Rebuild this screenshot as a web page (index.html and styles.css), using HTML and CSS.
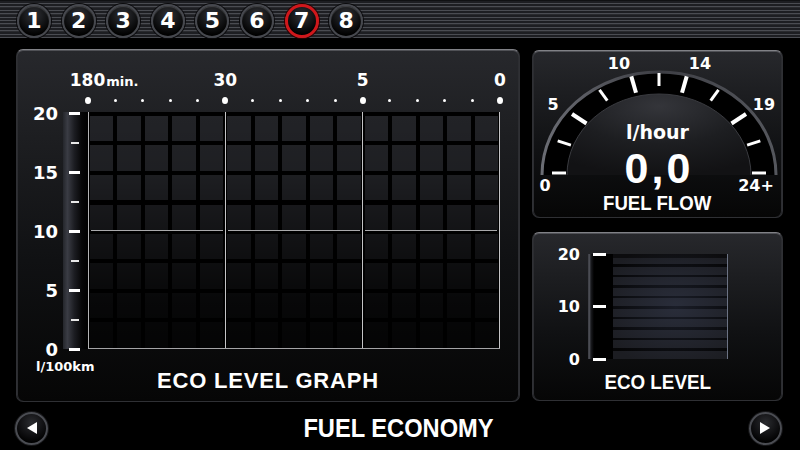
FILE: index.html
```html
<!DOCTYPE html>
<html>
<head>
<meta charset="utf-8">
<title>Fuel Economy</title>
<link rel="stylesheet" href="styles.css">
</head>
<body>
<header class="topbar">
  <nav class="tabs">
    <span class="tab">1</span>
    <span class="tab">2</span>
    <span class="tab">3</span>
    <span class="tab">4</span>
    <span class="tab">5</span>
    <span class="tab">6</span>
    <span class="tab active">7</span>
    <span class="tab">8</span>
  </nav>
</header>

<main class="main">
  <section class="panel graph-panel">
    <div class="xlabels">
      <span class="xl">180<span class="xmin">min.</span></span>
      <span class="xl">30</span>
      <span class="xl">5</span>
      <span class="xl">0</span>
    </div>
    <div class="dots">
      <i class="big"></i><i></i><i></i><i></i><i></i>
      <i class="big"></i><i></i><i></i><i></i><i></i>
      <i class="big"></i><i></i><i></i><i></i><i></i>
      <i class="big"></i>
    </div>
    <div class="chart">
      <div class="ylabels">
        <span>20</span><span>15</span><span>10</span><span>5</span><span>0</span>
      </div>
      <div class="yaxis">
        <i class="major"></i><i></i><i class="major"></i><i></i><i class="major"></i><i></i><i class="major"></i><i></i><i class="major"></i>
      </div>
      <div class="plot">
        <div class="seg"></div>
        <div class="seg"></div>
        <div class="seg"></div>
      </div>
    </div>
    <div class="graph-foot">
      <span class="unit">l/100km</span>
      <span class="graph-title">ECO LEVEL GRAPH</span>
      <span></span>
    </div>
  </section>

  <div class="side">
    <section class="panel flow-panel">
      <svg class="dial" width="251" height="168" viewBox="0 0 251 168">
        <defs>
          <linearGradient id="rim" x1="0" y1="0" x2="1" y2="0">
            <stop offset="0" stop-color="#6b6d74"/>
            <stop offset="0.5" stop-color="#3d3e44"/>
            <stop offset="1" stop-color="#55575d"/>
          </linearGradient>
          <radialGradient id="dome" cx="0.5" cy="0.15" r="0.85">
            <stop offset="0" stop-color="#34353a"/>
            <stop offset="0.55" stop-color="#1d1e21"/>
            <stop offset="1" stop-color="#121214"/>
          </radialGradient>
        </defs>
        <path d="M10 125 A117 103 0 0 1 244 125 Z" fill="#000"/>
        <path d="M10 125 A117 103 0 0 1 244 125" fill="none" stroke="url(#rim)" stroke-width="3"/>
        <path d="M35 125 A92 81 0 0 1 219 125 Z" fill="url(#dome)"/>
        <path d="M35 125 A92 81 0 0 1 219 125" fill="none" stroke="#3a3b40" stroke-width="1"/>
        <g stroke="#fff" stroke-width="3">
          <line x1="20" y1="123" x2="34" y2="123"/>
          <line x1="25.7" y1="90.9" x2="38.9" y2="95.1"/>
          <line x1="40" y1="64" x2="54.5" y2="73.5" stroke-width="4"/>
          <line x1="67.5" y1="39.9" x2="75.3" y2="50.7"/>
          <line x1="99.3" y1="26.4" x2="104" y2="42.8" stroke-width="4"/>
          <line x1="127" y1="23" x2="127" y2="36"/>
          <line x1="154.7" y1="26.4" x2="150" y2="42.8" stroke-width="4"/>
          <line x1="186.5" y1="39.9" x2="178.7" y2="50.7"/>
          <line x1="214" y1="64" x2="199.5" y2="73.5" stroke-width="4"/>
          <line x1="228.3" y1="90.9" x2="215.1" y2="95.1"/>
          <line x1="234" y1="123" x2="220" y2="123"/>
        </g>
      </svg>
      <span class="dl d0">0</span>
      <span class="dl d5">5</span>
      <span class="dl d10">10</span>
      <span class="dl d14">14</span>
      <span class="dl d19">19</span>
      <span class="dl d24">24+</span>
      <div class="flow-readout">
        <span class="flow-unit">l/hour</span>
        <span class="flow-value">0,0</span>
        <span class="flow-title">FUEL FLOW</span>
      </div>
    </section>

    <section class="panel eco-panel">
      <div class="eco-row">
        <div class="eco-labels"><span>20</span><span>10</span><span>0</span></div>
        <div class="eco-bar">
          <div class="eco-strip"><i></i><i></i><i></i></div>
          <div class="eco-stripes"></div>
        </div>
      </div>
      <div class="eco-title">ECO LEVEL</div>
    </section>
  </div>
</main>

<footer class="bottombar">
  <button class="navbtn" aria-label="Previous">
    <svg width="12" height="14" viewBox="0 0 12 14"><polygon points="11,1 11,13 1,7" fill="#fff"/></svg>
  </button>
  <h1 class="page-title">FUEL ECONOMY</h1>
  <button class="navbtn" aria-label="Next">
    <svg width="12" height="14" viewBox="0 0 12 14"><polygon points="1,1 1,13 11,7" fill="#fff"/></svg>
  </button>
</footer>
</body>
</html>
```
FILE: styles.css
```css
* { box-sizing: border-box; margin: 0; padding: 0; }

html, body {
  width: 800px;
  height: 450px;
  background: #000;
  overflow: hidden;
}

body {
  font-family: "DejaVu Sans", "Liberation Sans", sans-serif;
  font-weight: bold;
  color: #fff;
}

/* ---------- top bar ---------- */
.topbar {
  height: 38px;
  padding: 3px 0 0 17px;
  background: repeating-linear-gradient(to bottom,
    #1d1e22 0px, #1d1e22 2px,
    #4a4c52 2px, #4a4c52 3px,
    #292a2e 3px, #292a2e 3.4px);
  border-top: 1px solid #101113;
}

.tabs {
  display: flex;
  gap: 10.6px;
}

.tab {
  width: 34px;
  height: 34px;
  border-radius: 50%;
  display: flex;
  align-items: center;
  justify-content: center;
  font-size: 22px;
  line-height: 1;
  color: #fff;
  background: radial-gradient(circle at 50% 30%, #303136 0%, #141517 45%, #000 78%);
  border: 2px solid #46484e;
  box-shadow: 0 0 0 1px #0a0a0c, inset 0 1px 1px rgba(255, 255, 255, 0.18);
}

.tab.active {
  border: 3px solid #d0171b;
  box-shadow: 0 0 0 1px #2a0000;
}

/* ---------- main ---------- */
.main {
  display: flex;
  gap: 12px;
  height: 364px;
  padding: 11px 0 0 16px;
}

.panel {
  border-radius: 7px;
  border: 1px solid #2f3034;
  border-top-color: #808186;
  background: linear-gradient(180deg, #27282c 0%, #1d1e21 25%, #101113 60%, #060606 100%);
  box-shadow: inset 0 1px 0 #505156, inset 1px 0 0 #2c2d31, inset -1px 0 0 #2c2d31, 0 0 0 1px #000;
}

/* ---------- graph panel ---------- */
.graph-panel {
  width: 504px;
  height: 353px;
  padding-top: 20px;
}

.xlabels {
  display: flex;
  justify-content: space-between;
  width: 452px;
  margin-left: 51px;
  height: 20px;
  line-height: 20px;
  font-size: 17px;
}

.xl {
  width: 40px;
  text-align: center;
  white-space: nowrap;
}

.xmin {
  display: inline-block;
  width: 0;
  font-size: 13px;
  padding-left: 1px;
  text-align: left;
  vertical-align: baseline;
}

.dots {
  display: flex;
  justify-content: space-between;
  align-items: center;
  width: 418px;
  height: 6px;
  margin: 7px 0 0 68px;
}

.dots i {
  width: 6px;
  height: 6px;
  display: flex;
  align-items: center;
  justify-content: center;
}

.dots i::before {
  content: "";
  width: 3px;
  height: 3px;
  border-radius: 50%;
  background: #fff;
}

.dots i.big::before {
  width: 7px;
  height: 7px;
}

.chart {
  display: flex;
  margin-top: 9px;
  height: 237px;
}

.ylabels {
  width: 41px;
  height: 237px;
  padding-top: 1px;
  display: flex;
  flex-direction: column;
  justify-content: space-between;
  align-items: flex-end;
  font-size: 18px;
}

.ylabels span {
  height: 0;
  display: flex;
  align-items: center;
}

.yaxis {
  width: 25px;
  margin-left: 5px;
  height: 237px;
  padding-top: 1px;
  display: flex;
  flex-direction: column;
  justify-content: space-between;
  background: linear-gradient(to right, #24262b 0%, #3a3c44 18%, #1c1d22 45%, #060607 75%, #000 100%);
}

.yaxis i {
  height: 0;
  display: flex;
  align-items: center;
  padding-left: 8px;
}

.yaxis i::before {
  content: "";
  width: 8px;
  height: 2px;
  background: #e8e8e8;
}

.yaxis i.major {
  padding-left: 6px;
}

.yaxis i.major::before {
  width: 11px;
  height: 3px;
  background: #fff;
}

.plot {
  width: 412px;
  height: 237px;
  display: grid;
  grid-template-columns: repeat(3, 1fr);
  border-left: 1px solid #b4b4b6;
  border-bottom: 1px solid #a4a4a6;
  background:
    linear-gradient(to bottom, rgba(0,0,0,0) 0%, rgba(0,0,0,0.12) 25%, rgba(0,0,0,0.5) 55%, rgba(0,0,0,0.78) 80%, rgba(0,0,0,0.88) 100%),
    repeating-linear-gradient(to right, #000 0px, #000 1px, transparent 1px, transparent 24.5px, #000 24.5px, #000 27.47px),
    repeating-linear-gradient(to bottom, #000 0px, #000 4px, transparent 4px, transparent 29.5px),
    #222327;
}

.seg {
  border-right: 1px solid #c4c4c6;
  background: linear-gradient(#a9a9ab, #a9a9ab) no-repeat center / calc(100% - 4px) 1px;
}

.graph-foot {
  display: grid;
  grid-template-columns: 1fr auto 1fr;
  height: 32px;
  margin-top: 11px;
}

.unit {
  align-self: start;
  margin-left: 19px;
  font-size: 13px;
  line-height: 14px;
}

.graph-title {
  align-self: end;
  font-family: "Liberation Sans", Arial, sans-serif;
  font-size: 22px;
  line-height: 22px;
  letter-spacing: 0.8px;
}

/* ---------- side panels ---------- */
.side {
  display: flex;
  flex-direction: column;
  gap: 14px;
  margin-top: 1px;
  width: 251px;
}

.flow-panel {
  position: relative;
  height: 168px;
  display: flex;
  flex-direction: column;
  align-items: center;
}

.dial {
  position: absolute;
  left: -1px;
  top: -1px;
}

.dl {
  position: absolute;
  font-size: 16px;
  line-height: 16px;
  transform: translate(-50%, -50%);
}

.d0  { left: 12px;  top: 135px; }
.d5  { left: 20px;  top: 54px; }
.d10 { left: 86px;  top: 13px; }
.d14 { left: 167px; top: 13px; }
.d19 { left: 231px; top: 54px; }
.d24 { left: 223px; top: 135px; }

.flow-readout {
  position: relative;
  display: flex;
  flex-direction: column;
  align-items: center;
  padding-top: 70px;
}

.flow-unit {
  font-size: 19px;
  line-height: 23px;
}

.flow-value {
  font-family: "Liberation Sans", Arial, sans-serif;
  font-size: 43px;
  line-height: 48px;
  letter-spacing: 3px;
  margin: 0 0 0 3px;
}

.flow-title {
  font-family: "Liberation Sans", Arial, sans-serif;
  font-size: 20px;
  line-height: 22px;
  transform: scaleX(0.93);
}

.eco-panel {
  height: 169px;
  display: flex;
  flex-direction: column;
  align-items: center;
}

.eco-row {
  align-self: flex-start;
  display: flex;
  height: 105px;
  margin: 21px 0 0 7px;
}

.eco-labels {
  width: 40px;
  display: flex;
  flex-direction: column;
  justify-content: space-between;
  align-items: flex-end;
  font-size: 16px;
}

.eco-labels span {
  height: 0;
  display: flex;
  align-items: center;
}

.eco-bar {
  display: flex;
  margin-left: 8px;
}

.eco-strip {
  width: 25px;
  display: flex;
  flex-direction: column;
  justify-content: space-between;
  padding-left: 5px;
  background: linear-gradient(to right, #26272c 0px, #5a5c64 1px, #1a1b1f 3px, #000 6px, #000 100%);
}

.eco-strip i {
  height: 0;
  display: flex;
  align-items: center;
}

.eco-strip i::before {
  content: "";
  width: 13px;
  height: 3px;
  background: #fff;
}

.eco-stripes {
  width: 115px;
  border-right: 1px solid #6c7384;
  background:
    radial-gradient(ellipse 70% 60% at 55% 50%, rgba(70, 80, 110, 0.32), rgba(0, 0, 0, 0) 100%),
    linear-gradient(to bottom, #0c0c0e 0px, #0c0c0e 4px, transparent 4px),
    repeating-linear-gradient(to bottom, #050506 0px, #050506 2.5px, #1c1d22 2.5px, #1c1d22 10.5px);
}

.eco-title {
  font-family: "Liberation Sans", Arial, sans-serif;
  font-size: 20px;
  line-height: 20px;
  margin-top: 13px;
  transform: scaleX(0.94);
}

/* ---------- bottom bar ---------- */
.bottombar {
  height: 48px;
  padding: 4px 18px 0 15px;
  display: flex;
  align-items: center;
  justify-content: space-between;
}

.navbtn {
  width: 33px;
  height: 33px;
  border-radius: 50%;
  border: 2px solid #4a4c52;
  background: radial-gradient(circle at 50% 30%, #2a2b2f 0%, #0d0d0f 55%, #000 80%);
  box-shadow: 0 0 0 1px #151517;
  display: flex;
  align-items: center;
  justify-content: center;
}

.page-title {
  font-family: "Liberation Sans", Arial, sans-serif;
  font-weight: bold;
  font-size: 26px;
  line-height: 28px;
  transform: scaleX(0.91);
}
```
